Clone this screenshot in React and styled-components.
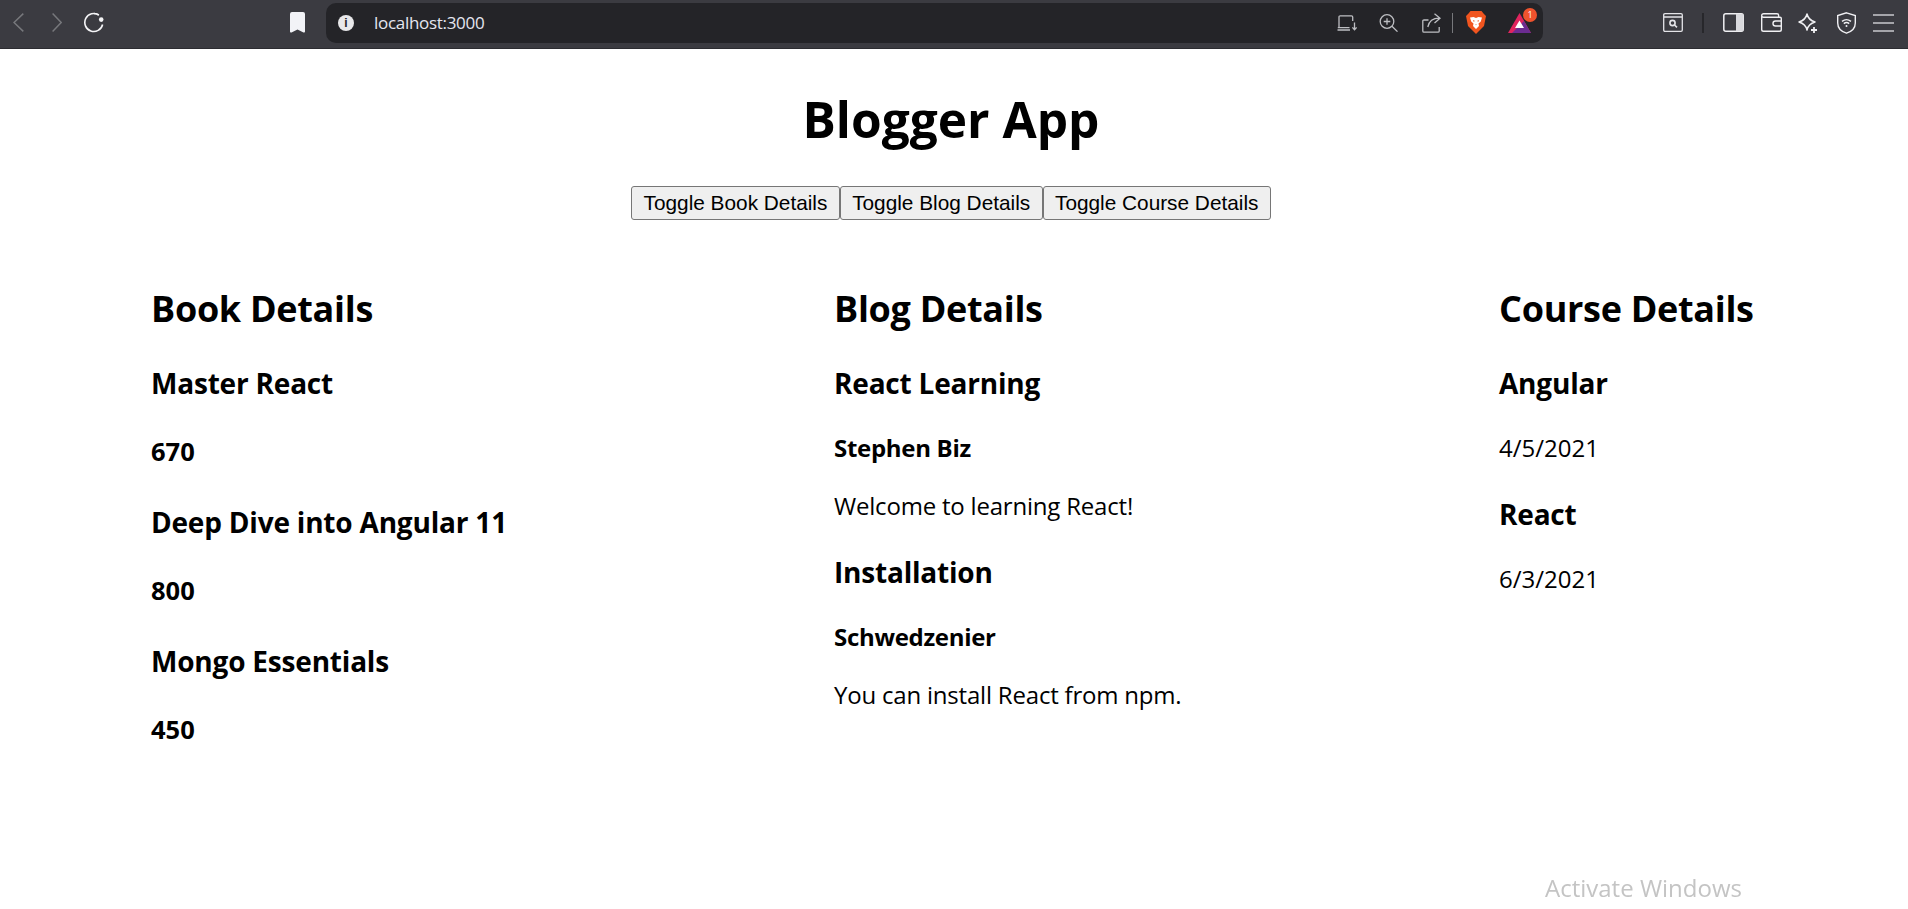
import React from "react";
import styled, { createGlobalStyle } from "styled-components";

const books = [
	{ title: "Master React", price: 670 },
	{ title: "Deep Dive into Angular 11", price: 800 },
	{ title: "Mongo Essentials", price: 450 },
];

const blogs = [
	{ title: "React Learning", author: "Stephen Biz", body: "Welcome to learning React!" },
	{ title: "Installation", author: "Schwedzenier", body: "You can install React from npm." },
];

const courses = [
	{ title: "Angular", date: "4/5/2021" },
	{ title: "React", date: "6/3/2021" },
];

function App() {
	return (
		<>
			<GlobalStyle />
			<Chrome>
				<Slot $gap={0}>
					<svg width="11" height="19" viewBox="0 0 11 19" fill="none" stroke="#77787c" strokeWidth="1.5">
						<path d="M10.3 0.6 L1 9.5 L10.3 18.4" />
					</svg>
				</Slot>
				<Slot $gap={28}>
					<svg width="10" height="19" viewBox="0 0 10 19" fill="none" stroke="#77787c" strokeWidth="1.5">
						<path d="M0.6 0.6 L9.2 9.5 L0.6 18.4" />
					</svg>
				</Slot>
				<Slot $gap={21}>
					<svg width="21" height="21" viewBox="0 0 21 21" fill="none" stroke="#f4f4f6" strokeWidth="1.6">
						<path d="M15.8 3 A9 9 0 1 0 19.6 12.5" />
						<path d="M11 1.5 A9 9 0 0 1 15.8 3" />
						<circle cx="18.2" cy="7.6" r="2.3" fill="#f4f4f6" stroke="none" />
					</svg>
				</Slot>
				<Slot $gap={186}>
					<svg width="15" height="21" viewBox="0 0 15 21">
						<path d="M0 2 Q0 0 2 0 H13 Q15 0 15 2 V19.5 Q15 21 13.5 20.4 L7.5 17.6 L1.5 20.4 Q0 21 0 19.5 Z" fill="#f2f3f7" />
					</svg>
				</Slot>
				<UrlBar>
					<InfoDot>i</InfoDot>
					<UrlText>localhost:3000</UrlText>
					<UrlIcons>
						<Slot $gap={0}>
							<svg width="20" height="16" viewBox="0 0 20 16" fill="none" stroke="#bdbec2" strokeWidth="1.3">
								<path d="M2 12.5 V2 Q2 0.8 3.2 0.8 H14.5 Q15.7 0.8 15.7 2 V6 M0.5 15 H13 M0.8 12.6 H12.5 M17.5 7.5 V14.5 M15.4 12.4 L17.5 14.8 L19.6 12.4" />
							</svg>
						</Slot>
						<Slot $gap={22}>
							<svg width="19" height="18" viewBox="0 0 19 18" fill="none" stroke="#bdbec2" strokeWidth="1.3">
								<circle cx="8" cy="7.5" r="6.8" />
								<path d="M13 12.3 L18.5 17.6 M8 4.2 V10.8 M4.7 7.5 H11.3" />
							</svg>
						</Slot>
						<Slot $gap={24}>
							<svg width="19" height="20" viewBox="0 0 19 20" fill="none" stroke="#bdbec2" strokeWidth="1.3">
								<path d="M6.5 7 H2 Q0.8 7 0.8 8.2 V18 Q0.8 19.2 2 19.2 H16 Q17.2 19.2 17.2 18 V14 M12.5 0.8 L18 5.2 L12.5 10 M18 5.2 C11 5 7 8 5.8 14" />
							</svg>
						</Slot>
						<UrlDivider />
						<Slot $gap={13}>
							<svg width="20" height="23" viewBox="0 0 20 23">
								<path d="M4.5 0 H15.5 L17.5 2.5 L20 5 L18 15 L10 23 L2 15 L0 5 L2.5 2.5 Z" fill="#f1551f" />
								<path d="M4 6.5 L7.5 6 L10 7 L12.5 6 L16 6.5 L14.8 10.5 L12.5 12.5 L13 15 L10 18 L7 15 L7.5 12.5 L5.2 10.5 Z" fill="#fff" />
								<path d="M7 9 L9 10 L7.5 10.8 Z M13 9 L11 10 L12.5 10.8 Z M9.5 13 H10.5 L10 14.5 Z" fill="#f1551f" />
							</svg>
						</Slot>
						<RewardIcon>
							<svg width="23" height="20" viewBox="0 0 23 20">
								<path d="M11.5 0 L23 20 H0 Z" fill="#e0245e" />
								<path d="M16 8 L23 20 H4 L8 16 Z" fill="#6b2c91" />
								<path d="M11.5 7.5 L16 15 H7 Z" fill="#fff" />
							</svg>
							<Badge>1</Badge>
						</RewardIcon>
					</UrlIcons>
				</UrlBar>
				<RightTools>
					<Slot $gap={0}>
						<svg width="20" height="19" viewBox="0 0 20 19" fill="none" stroke="#e4e4e8" strokeWidth="1.3">
							<path d="M0.7 2 Q0.7 0.7 2 0.7 H18 Q19.3 0.7 19.3 2 V17 Q19.3 18.3 18 18.3 H2 Q0.7 18.3 0.7 17 Z M0.7 4 H19.3" />
							<circle cx="9.5" cy="10" r="2.6" strokeWidth="1.6" />
							<path d="M11.5 12 L14 14.4" strokeWidth="1.6" />
						</svg>
					</Slot>
					<ToolDivider />
					<Slot $gap={19}>
						<svg width="21" height="19" viewBox="0 0 21 19">
							<rect x="0.8" y="0.8" width="19.4" height="17.4" rx="2" fill="none" stroke="#f0f0f3" strokeWidth="1.5" />
							<rect x="13" y="0.8" width="7.2" height="17.4" fill="#d9d9dd" />
						</svg>
					</Slot>
					<Slot $gap={17}>
						<svg width="21" height="19" viewBox="0 0 21 19" fill="none" stroke="#f0f0f3" strokeWidth="1.4">
							<path d="M0.7 3.5 V16.5 Q0.7 18.3 2.5 18.3 H18.5 Q20.3 18.3 20.3 16.5 V5.5 Q20.3 4.2 19 4.2 H2.5 Q0.7 4.2 0.7 2.7 Q0.7 0.7 2.7 0.7 H16 Q17.6 0.7 17.6 2.3 V4.2" />
							<path d="M20.3 8 H14.5 Q12 8 12 10.5 Q12 13 14.5 13 H20.3" />
						</svg>
					</Slot>
					<Slot $gap={16}>
						<svg width="20" height="20" viewBox="0 0 20 20" fill="none" stroke="#f0f0f3" strokeWidth="1.5">
							<path d="M9 1 C10 5.5 12 7.5 17 9 C12 10.5 10 12.5 9 17 C8 12.5 6 10.5 1 9 C6 7.5 8 5.5 9 1 Z" strokeLinejoin="round" />
							<path d="M16 14 V20 M13 17 H19" strokeWidth="1.8" />
						</svg>
					</Slot>
					<Slot $gap={19}>
						<svg width="19" height="22" viewBox="0 0 19 22" fill="none" stroke="#f0f0f3" strokeWidth="1.4">
							<path d="M9.5 0.8 L18.3 3.6 V11 C18.3 16 14.5 19.6 9.5 21.2 C4.5 19.6 0.7 16 0.7 11 V3.6 Z" />
							<path d="M5 9.4 Q9.5 5.8 14 9.4 M6.8 11.6 Q9.5 9.4 12.2 11.6" />
							<circle cx="9.5" cy="14" r="1" fill="#f0f0f3" stroke="none" />
						</svg>
					</Slot>
					<Slot $gap={17}>
						<svg width="21" height="18" viewBox="0 0 21 18" stroke="#c9c9cd" strokeWidth="1.6">
							<path d="M0 1 H21 M0 9 H21 M0 17 H21" />
						</svg>
					</Slot>
				</RightTools>
			</Chrome>
			<Page>
				<Title>Blogger App</Title>
				<Toggles>
					<ToggleButton>Toggle Book Details</ToggleButton>
					<ToggleButton>Toggle Blog Details</ToggleButton>
					<ToggleButton>Toggle Course Details</ToggleButton>
				</Toggles>
				<Columns>
					<div>
						<ColumnTitle>Book Details</ColumnTitle>
						{books.map((b) => (
							<div key={b.title}>
								<ItemTitle>{b.title}</ItemTitle>
								<Price>{b.price}</Price>
							</div>
						))}
					</div>
					<div>
						<ColumnTitle>Blog Details</ColumnTitle>
						{blogs.map((b) => (
							<div key={b.title}>
								<ItemTitle>{b.title}</ItemTitle>
								<Author>{b.author}</Author>
								<Body>{b.body}</Body>
							</div>
						))}
					</div>
					<div>
						<ColumnTitle>Course Details</ColumnTitle>
						{courses.map((c) => (
							<div key={c.title}>
								<ItemTitle>{c.title}</ItemTitle>
								<DateText>{c.date}</DateText>
							</div>
						))}
					</div>
				</Columns>
			</Page>
			<Watermark>Activate Windows</Watermark>
		</>
	);
}

export default App;

const GlobalStyle = createGlobalStyle`
	html, body {
		margin: 0;
		padding: 0;
		background: #fff;
		overflow: hidden;
	}
`;

const Chrome = styled.div`
	height: 49px;
	background: #3b3b41;
	border-bottom: 1px solid #2c2c31;
	box-sizing: border-box;
	display: flex;
	align-items: center;
	padding: 0 14px 3px 13px;
`;

const Slot = styled.span`
	display: flex;
	flex: none;
	margin-left: ${(p) => p.$gap}px;
`;

const UrlBar = styled.div`
	width: 1217px;
	height: 40px;
	flex: none;
	background: #242428;
	border-radius: 10px;
	display: flex;
	align-items: center;
	padding: 0 12px;
	box-sizing: border-box;
	margin-left: 21px;
`;

const InfoDot = styled.span`
	width: 16px;
	height: 16px;
	border-radius: 50%;
	background: #e8e8ea;
	color: #242428;
	font: bold 12px/16px "Liberation Sans", sans-serif;
	text-align: center;
`;

const UrlText = styled.span`
	font: 17px "Open Sans", sans-serif;
	letter-spacing: -0.3px;
	color: #e4e6f0;
	margin-left: 20px;
`;

const UrlIcons = styled.div`
	margin-left: auto;
	display: flex;
	align-items: center;
`;

const UrlDivider = styled.span`
	width: 1px;
	height: 20px;
	background: #77787c;
	margin-left: 11px;
`;

const RewardIcon = styled.span`
	display: flex;
	position: relative;
	margin-left: 22px;
`;

const Badge = styled.span`
	position: absolute;
	top: -5px;
	right: -6px;
	width: 14px;
	height: 14px;
	border-radius: 50%;
	background: #f0532d;
	color: #fff;
	font: 9px/14px "Open Sans", sans-serif;
	text-align: center;
`;

const RightTools = styled.div`
	margin-left: auto;
	display: flex;
	align-items: center;
`;

const ToolDivider = styled.span`
	width: 2px;
	height: 20px;
	background: #27272b;
	margin-left: 19px;
`;

const Page = styled.div`
	width: 1902px;
	font-family: "Open Sans", "Noto Sans", sans-serif;
	color: #000;
`;

const Title = styled.h1`
	margin: 38px 0 0;
	font-size: 49.6px;
	line-height: 64px;
	font-weight: 700;
	text-align: center;
`;

const Toggles = styled.div`
	display: flex;
	justify-content: center;
	margin-top: 35px;
`;

const ToggleButton = styled.button`
	height: 34px;
	padding: 0 11.4px;
	font: 20.8px "Liberation Sans", Arial, sans-serif;
	color: #000;
	background: #efefef;
	border: 1px solid #767676;
	border-radius: 3px;
`;

const Columns = styled.div`
	display: grid;
	grid-template-columns: 683px 665px 1fr;
	padding-left: 151px;
	margin-top: 65px;
`;

const ColumnTitle = styled.h2`
	margin: 0;
	font-size: 36px;
	line-height: 48px;
	font-weight: 700;
	letter-spacing: -0.3px;
`;

const ItemTitle = styled.h3`
	margin: 31px 0 0;
	font-size: 28px;
	line-height: 39px;
	font-weight: 700;
	letter-spacing: -0.2px;
`;

const Price = styled.h4`
	margin: 32px 0 36px;
	font-size: 25.5px;
	line-height: 32px;
	font-weight: 700;
`;

const Author = styled.h4`
	margin: 29px 0 26px;
	font-size: 24px;
	line-height: 32px;
	font-weight: 700;
	letter-spacing: -0.3px;
`;

const Body = styled.p`
	margin: 26px 0 31px;
	font-size: 24px;
	line-height: 32px;
	letter-spacing: -0.2px;
`;

const DateText = styled(Body)`
	margin: 29px 0 31px;
	letter-spacing: 0;
`;

const Watermark = styled.div`
	position: fixed;
	left: 1545px;
	top: 871px;
	font: 24px "Open Sans", sans-serif;
	color: #c4c4c4;
`;
